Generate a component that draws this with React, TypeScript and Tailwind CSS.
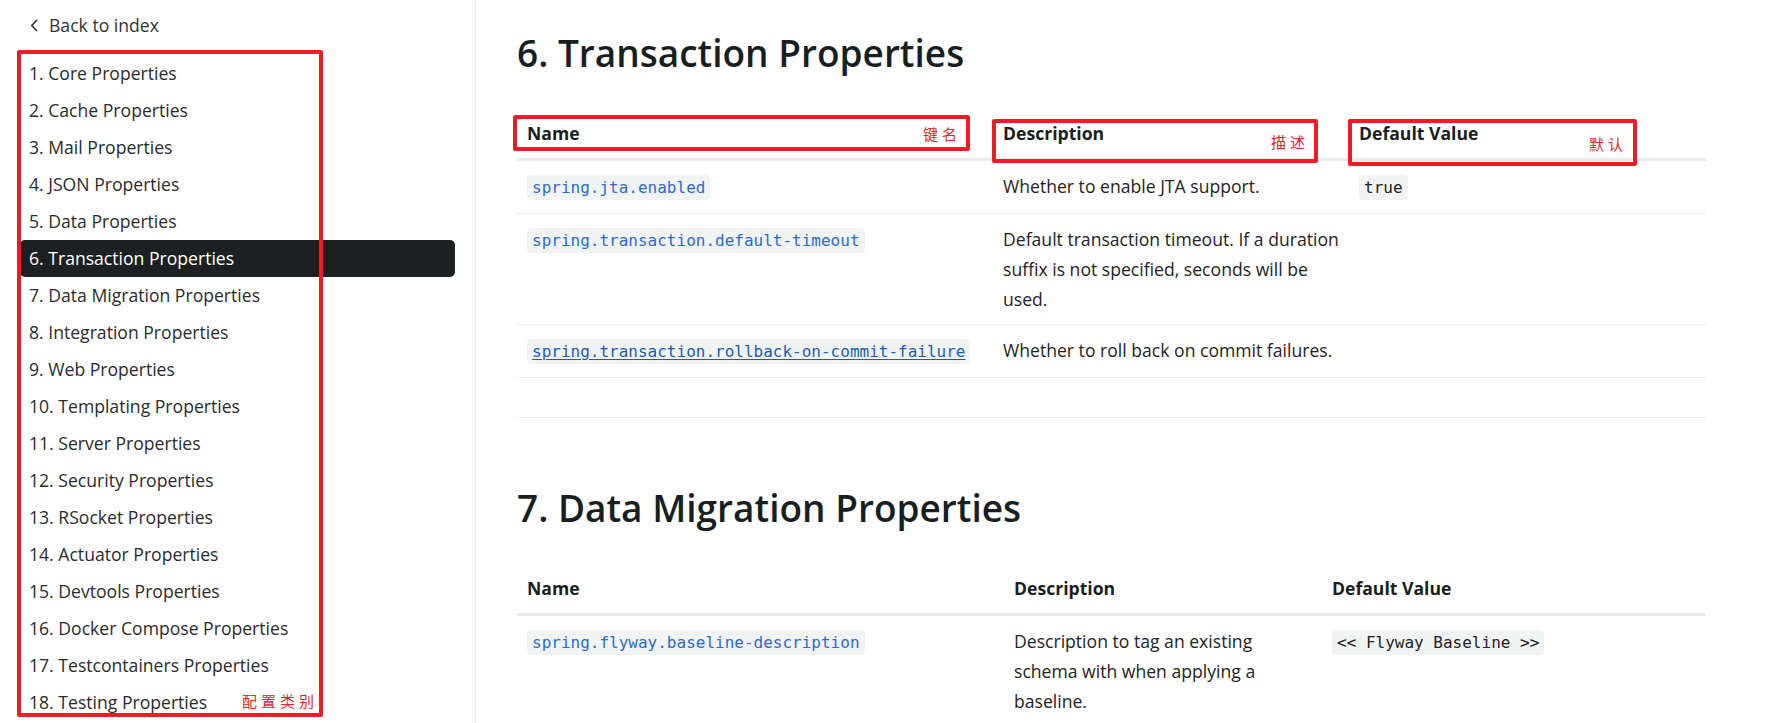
import React from 'react'

const sections = [
  '1. Core Properties',
  '2. Cache Properties',
  '3. Mail Properties',
  '4. JSON Properties',
  '5. Data Properties',
  '6. Transaction Properties',
  '7. Data Migration Properties',
  '8. Integration Properties',
  '9. Web Properties',
  '10. Templating Properties',
  '11. Server Properties',
  '12. Security Properties',
  '13. RSocket Properties',
  '14. Actuator Properties',
  '15. Devtools Properties',
  '16. Docker Compose Properties',
  '17. Testcontainers Properties',
  '18. Testing Properties',
]

interface Row {
  name: string
  link?: boolean
  desc: string[]
  def?: string
}

const txRows: Row[] = [
  { name: 'spring.jta.enabled', desc: ['Whether to enable JTA support.'], def: 'true' },
  {
    name: 'spring.transaction.default-timeout',
    desc: ['Default transaction timeout. If a duration', 'suffix is not specified, seconds will be', 'used.'],
  },
  { name: 'spring.transaction.rollback-on-commit-failure', link: true, desc: ['Whether to roll back on commit failures.'] },
]

const migRows: Row[] = [
  {
    name: 'spring.flyway.baseline-description',
    desc: ['Description to tag an existing', 'schema with when applying a', 'baseline.'],
    def: '<< Flyway Baseline >>',
  },
]

function Code({ children, link }: { children: React.ReactNode; link?: boolean }) {
  return (
    <code
      className={
        'rounded-[4px] bg-[#f2f4f4] px-[5px] py-[3px] text-[16px] font-["DejaVu_Sans_Mono",monospace] ' +
        (link ? 'text-[#1d5bb8] underline underline-offset-2' : 'text-[#2c6bcc]')
      }
    >
      {children}
    </code>
  )
}

function PropTable({ rows, widths, empty }: { rows: Row[]; widths: string[]; empty?: boolean }) {
  return (
    <table className="mt-[33px] w-full table-fixed border-collapse text-left">
      <colgroup>
        {widths.map((w, i) => (
          <col key={i} className={w} />
        ))}
      </colgroup>
      <thead>
        <tr className="border-b-[3px] border-[#e8ebee]">
          <th className="px-[10px] py-[10px] align-top font-bold leading-[30px] text-[#191e1e]">Name</th>
          <th className="px-[10px] py-[10px] align-top font-bold leading-[30px] text-[#191e1e]">Description</th>
          <th className="px-[10px] py-[10px] align-top font-bold leading-[30px] text-[#191e1e]">Default Value</th>
        </tr>
      </thead>
      <tbody>
        {rows.map(r => (
          <tr key={r.name} className="border-b border-[#e9ebec]">
            <td className="px-[10px] py-[10px] align-top leading-[30px]">
              <Code link={r.link}>{r.name}</Code>
            </td>
            <td className="px-[10px] py-[10px] align-top leading-[30px] text-[#1f2323]">
              {r.desc.map(l => (
                <div key={l} className="whitespace-nowrap">
                  {l}
                </div>
              ))}
            </td>
            <td className="px-[10px] py-[10px] align-top leading-[30px]">
              {r.def && <code className='rounded-[4px] bg-[#f2f4f4] px-[5px] py-[3px] text-[16px] text-[#222] font-["DejaVu_Sans_Mono",monospace]'>{r.def}</code>}
            </td>
          </tr>
        ))}
        {empty && (
          <tr className="border-b border-[#e9ebec]">
            <td className="h-[40px]" />
            <td />
            <td />
          </tr>
        )}
      </tbody>
    </table>
  )
}

function Mark({ className, label, labelClass }: { className: string; label: string; labelClass: string }) {
  return (
    <div className={'pointer-events-none absolute rounded-[2px] border-[4px] border-[#ee1c25] ' + className}>
      <span
        className={
          'absolute text-[15px] leading-none tracking-[4px] text-[#e8242b] font-["Noto_Sans_CJK_SC",serif] ' + labelClass
        }
      >
        {label}
      </span>
    </div>
  )
}

export default function App() {
  return (
    <div className='relative flex h-[723px] overflow-hidden bg-white text-[17.6px] text-[#222] font-["Open_Sans",sans-serif]'>
      <aside className="w-[476px] shrink-0 border-r border-[#efefef] px-[20px]">
        <div className="flex h-[50px] items-center gap-[11px] pl-[10px] text-[#333]">
          <svg width="8" height="13" viewBox="0 0 8 13" fill="none">
            <path d="M6.5 1.5 1.8 6.5l4.7 5" stroke="#333" strokeWidth="1.7" strokeLinecap="round" strokeLinejoin="round" />
          </svg>
          <span>Back to index</span>
        </div>
        <nav className="mt-[5px] flex flex-col">
          {sections.map(s => (
            <div
              key={s}
              className={
                'flex h-[37px] items-center rounded-[5px] pl-[9px] ' +
                (s.startsWith('6.') ? 'bg-[#1c2022] text-white' : 'text-[#2b2b2b]')
              }
            >
              {s}
            </div>
          ))}
        </nav>
      </aside>

      <main className="min-w-0 flex-1 pl-[41px] pr-[64px]">
        <h1 className="mt-[31px] text-[37px] font-semibold leading-[44px] text-[#191e1e]">6. Transaction Properties</h1>
        <PropTable rows={txRows} widths={['w-[476px]', 'w-[356px]', 'w-[357px]']} empty />
        <h2 className="mt-[68px] text-[37px] font-semibold leading-[44px] text-[#191e1e]">7. Data Migration Properties</h2>
        <PropTable rows={migRows} widths={['w-[487px]', 'w-[318px]', 'w-[384px]']} />
      </main>

      <Mark className="left-[17px] top-[50px] h-[667px] w-[306px]" label="配置类别" labelClass="left-[221px] top-[639px]" />
      <Mark className="left-[513px] top-[115px] h-[36px] w-[457px]" label="键名" labelClass="left-[406px] top-[7px]" />
      <Mark className="left-[992px] top-[119px] h-[44px] w-[326px]" label="描述" labelClass="left-[275px] top-[11px]" />
      <Mark className="left-[1348px] top-[119px] h-[47px] w-[289px]" label="默认" labelClass="left-[237px] top-[13px]" />
    </div>
  )
}
